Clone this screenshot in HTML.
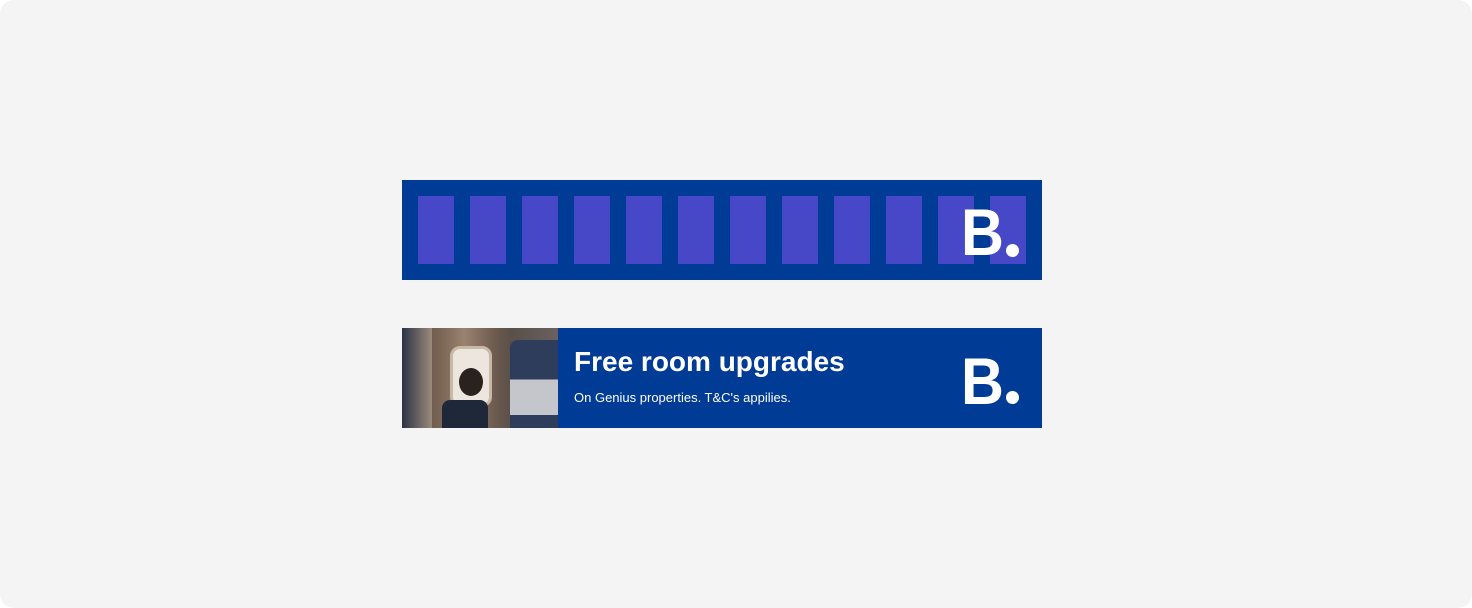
<!DOCTYPE html>
<html><head><style>
body{margin:0;width:1472px;height:608px;background:#fff;font-family:"Liberation Sans",sans-serif;}
.card{position:absolute;left:0;top:0;width:1472px;height:608px;background:#f4f4f4;border-radius:14px;}
.b1{position:absolute;left:402px;top:180px;width:640px;height:100px;background:#003b95;}
.r{position:absolute;top:16px;width:36px;height:68px;background:#4648c8;}
.logo{position:absolute;color:#fff;font-weight:bold;font-size:66px;line-height:1;transform:scaleX(0.9);transform-origin:left top;}
.dot{position:absolute;width:13px;height:13px;border-radius:50%;background:#fff;}
.b2{position:absolute;left:402px;top:328px;width:640px;height:100px;background:#003b95;}
.photo{position:absolute;left:0;top:0;width:156px;height:100px;background:linear-gradient(90deg,#5a4a40 0%,#7a6556 25%,#9a8270 40%,#6c5a4e 60%,#5a5048 70%,#6a6060 100%);overflow:hidden;}
</style></head><body>
<div class="card"></div>
<div class="b1">
<div class="r" style="left:16px"></div><div class="r" style="left:68px"></div><div class="r" style="left:120px"></div><div class="r" style="left:172px"></div><div class="r" style="left:224px"></div><div class="r" style="left:276px"></div><div class="r" style="left:328px"></div><div class="r" style="left:380px"></div><div class="r" style="left:432px"></div><div class="r" style="left:484px"></div><div class="r" style="left:536px"></div><div class="r" style="left:588px"></div>
<div class="logo" style="left:559px;top:19px">B</div>
<div class="dot" style="left:604px;top:64px"></div>
</div>
<div class="b2">
<div class="photo">
<div style="position:absolute;left:0;top:0;width:30px;height:100px;background:linear-gradient(90deg,#2c3346,#9b8a7a);"></div>
<div style="position:absolute;left:48px;top:18px;width:36px;height:55px;border-radius:10px;background:#ece6df;border:3px solid #c8b8a6;"></div>
<div style="position:absolute;left:57px;top:40px;width:24px;height:28px;border-radius:50%;background:#2a221e;"></div>
<div style="position:absolute;left:40px;top:72px;width:46px;height:28px;border-radius:8px 8px 0 0;background:#1f2838;"></div>
<div style="position:absolute;left:108px;top:12px;width:48px;height:88px;border-radius:8px 0 0 0;background:linear-gradient(#2e3d5c 0 45%,#c4c6cc 45% 85%,#2e3d5c 85%);"></div>
</div>
<div style="position:absolute;left:172px;top:18px;color:#fff;font-weight:bold;font-size:28px;">Free room upgrades</div>
<div style="position:absolute;left:172px;top:62px;color:#fff;font-size:13px;">On Genius properties. T&amp;C's appilies.</div>
<div class="logo" style="left:559px;top:20px">B</div>
<div class="dot" style="left:604px;top:63px"></div>
</div>
</body></html>
